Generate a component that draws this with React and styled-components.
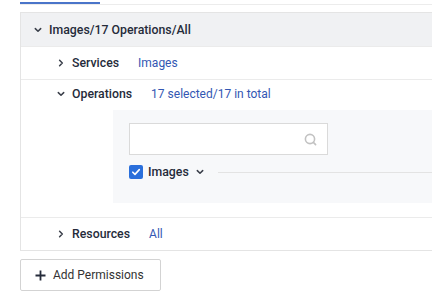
import React from 'react';
import styled, { createGlobalStyle } from 'styled-components';

const GlobalStyle = createGlobalStyle`
  body {
    margin: 0;
    background: #ffffff;
    font-family: Roboto, "Liberation Sans", Arial, sans-serif;
    color: #252b3a;
    overflow: hidden;
  }
`;

const Chevron = ({ open }) => (
  <svg width="8" height="8" viewBox="0 0 8 8" fill="none">
    {open ? (
      <path d="M1.3 2.6 L4 5.3 L6.7 2.6" stroke="#3a3f4a" strokeWidth="1.5" strokeLinecap="round" strokeLinejoin="round" />
    ) : (
      <path d="M2.6 1.3 L5.3 4 L2.6 6.7" stroke="#3a3f4a" strokeWidth="1.5" strokeLinecap="round" strokeLinejoin="round" />
    )}
  </svg>
);

const SearchIcon = () => (
  <svg width="13" height="13" viewBox="0 0 13 13" fill="none">
    <circle cx="6" cy="6" r="4.6" stroke="#c2c2c2" strokeWidth="1.6" />
    <path d="M9.4 9.4 L11.6 11.6" stroke="#c2c2c2" strokeWidth="1.6" strokeLinecap="round" />
  </svg>
);

const PlusIcon = () => (
  <svg width="11" height="11" viewBox="0 0 11 11">
    <path d="M5.5 0.5 V10.5 M0.5 5.5 H10.5" stroke="#252b3a" strokeWidth="1.8" />
  </svg>
);

const CheckIcon = () => (
  <svg width="10" height="10" viewBox="0 0 10 10" fill="none">
    <path d="M1.8 5.2 L4 7.4 L8.3 2.6" stroke="#fff" strokeWidth="1.6" strokeLinecap="round" strokeLinejoin="round" />
  </svg>
);

const Page = styled.div`
  padding: 2px 0 0 20px;
  width: 460px;
`;

const TabBar = styled.div`
  height: 2px;
  border-bottom: 1px solid #ececec;
`;

const ActiveTab = styled.div`
  width: 80px;
  height: 2px;
  background: #4a74c9;
`;

const Panel = styled.div`
  margin-top: 7px;
  border: 1px solid #e4e4e4;
`;

const Header = styled.div`
  display: flex;
  align-items: center;
  gap: 7px;
  height: 33px;
  padding-left: 13px;
  background: #f0f1f3;
  font-size: 12.3px;
  font-weight: 500;
`;

const Row = styled.div`
  display: flex;
  align-items: center;
  height: ${p => p.h || 32}px;
  padding-left: 36px;
  border-top: 1px solid #ebebeb;
  font-size: 12.3px;
`;

const Label = styled.span`
  display: flex;
  align-items: center;
  gap: 7px;
  font-weight: 500;
  margin-right: 19px;
`;

const Value = styled.span`
  color: #3357b3;
  font-size: 12px;
`;

const Section = styled.div`
  padding-bottom: 14px;
`;

const Body = styled.div`
  margin-left: 92px;
  margin-top: 2px;
  padding: 13px 0 24px 16px;
  background: #f7f8fa;
`;

const SearchBox = styled.div`
  display: flex;
  align-items: center;
  justify-content: flex-end;
  width: 199px;
  height: 32px;
  padding-right: 10px;
  box-sizing: border-box;
  background: #fff;
  border: 1px solid #dadada;
`;

const CheckRow = styled.div`
  display: flex;
  align-items: center;
  margin-top: 10px;
  font-size: 12.3px;
  font-weight: 500;
`;

const Checkbox = styled.span`
  display: flex;
  align-items: center;
  justify-content: center;
  width: 14px;
  height: 14px;
  border-radius: 2px;
  background: #2a6fdb;
  margin-right: 5px;
`;

const Caret = styled.span`
  display: flex;
  margin-left: 7px;
  margin-right: 14px;
`;

const Line = styled.div`
  flex: 1;
  height: 1px;
  background: #e3e3e3;
`;

const Button = styled.button`
  display: flex;
  align-items: center;
  gap: 7px;
  margin-top: 8px;
  width: 141px;
  height: 32px;
  padding: 0 0 0 14px;
  background: #fff;
  border: 1px solid #d3d3d3;
  border-radius: 2px;
  font-family: inherit;
  font-size: 12px;
  color: #333;
`;

export default function App() {
  return (
    <Page>
      <GlobalStyle />
      <TabBar>
        <ActiveTab />
      </TabBar>
      <Panel>
        <Header>
          <Chevron open />
          Images/17 Operations/All
        </Header>
        <Row>
          <Label>
            <Chevron />
            Services
          </Label>
          <Value>Images</Value>
        </Row>
        <Section>
          <Row h={28}>
            <Label>
              <Chevron open />
              Operations
            </Label>
            <Value>17 selected/17 in total</Value>
          </Row>
          <Body>
            <SearchBox>
              <SearchIcon />
            </SearchBox>
            <CheckRow>
              <Checkbox>
                <CheckIcon />
              </Checkbox>
              Images
              <Caret>
                <Chevron open />
              </Caret>
              <Line />
            </CheckRow>
          </Body>
        </Section>
        <Row>
          <Label>
            <Chevron />
            Resources
          </Label>
          <Value>All</Value>
        </Row>
      </Panel>
      <Button>
        <PlusIcon />
        Add Permissions
      </Button>
    </Page>
  );
}
